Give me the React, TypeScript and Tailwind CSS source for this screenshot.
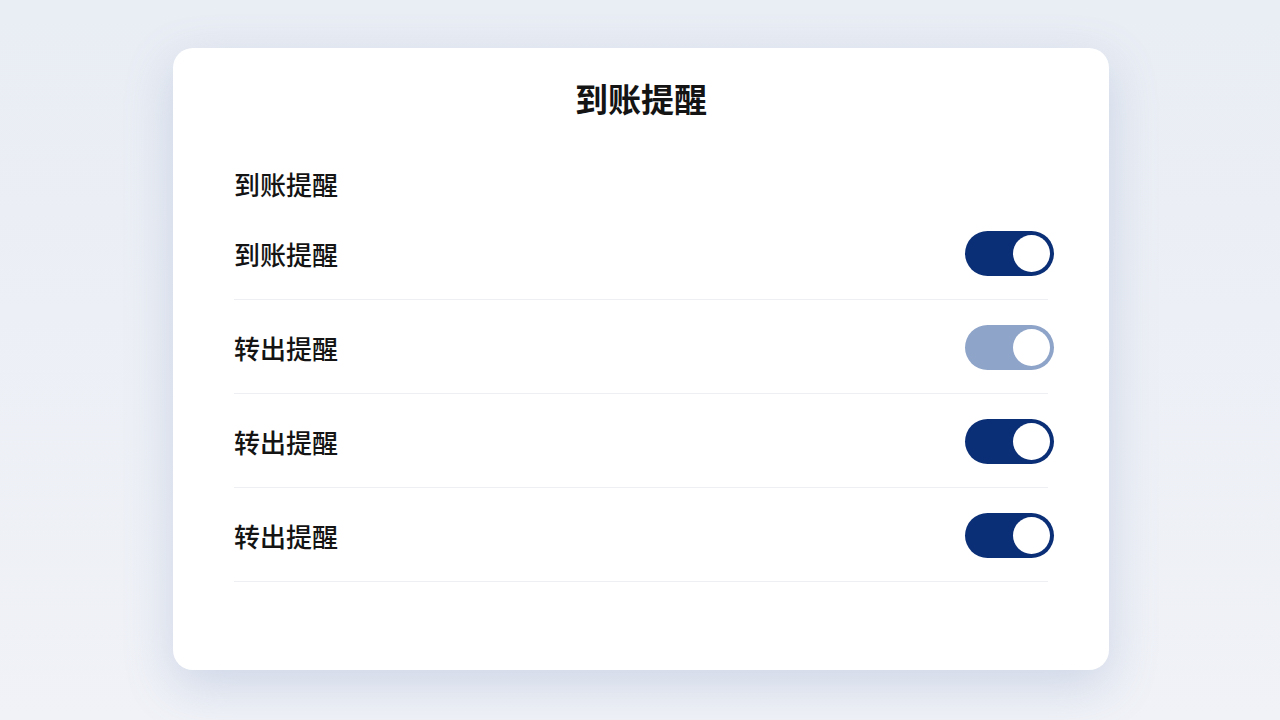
import { useState } from "react";

type Item = { id: string; label: string; on: boolean; dim?: boolean };

const initial: Item[] = [
  { id: "in", label: "到账提醒", on: true },
  { id: "out1", label: "转出提醒", on: true, dim: true },
  { id: "out2", label: "转出提醒", on: true },
  { id: "out3", label: "转出提醒", on: true },
];

function Toggle({ on, dim, onClick }: { on: boolean; dim?: boolean; onClick: () => void }) {
  return (
    <button
      onClick={onClick}
      className={`-mr-[6px] flex h-[45px] w-[89px] shrink-0 items-center rounded-full px-[4px] ${
        on ? (dim ? "justify-end bg-[#8ea4c8]" : "justify-end bg-[#0b2f76]") : "justify-start bg-[#d5dbe6]"
      }`}
    >
      <span className="h-[37px] w-[37px] rounded-full bg-white" />
    </button>
  );
}

export default function App() {
  const [items, setItems] = useState(initial);

  function flip(id: string) {
    setItems(list => list.map(i => (i.id === id ? { ...i, on: !i.on } : i)));
  }

  return (
    <div
      className="flex h-[720px] w-full items-start justify-center bg-gradient-to-b from-[#e9edf4] to-[#f0f2f7] pt-[48px] text-[#141414]"
      style={{ fontFamily: '"Noto Sans CJK SC", "Noto Sans", sans-serif' }}
    >
      <div className="ml-[2px] h-[622px] w-[936px] rounded-[20px] bg-white px-[61px] pt-[28px] shadow-[0_16px_48px_rgba(120,145,190,0.28)]">
        <h1 className="text-center text-[33px] font-bold leading-[44px]">到账提醒</h1>
        <div className="mt-[48px] text-[26px] font-medium leading-[32px]">到账提醒</div>
        <div className="mt-[6px]">
          {items.map(item => (
            <div key={item.id} className="flex h-[94px] items-center justify-between border-b border-[#eeeff2] pt-[2px]">
              <span className="text-[26px] font-medium leading-[32px]">{item.label}</span>
              <Toggle on={item.on} dim={item.dim} onClick={() => flip(item.id)} />
            </div>
          ))}
        </div>
      </div>
    </div>
  );
}
